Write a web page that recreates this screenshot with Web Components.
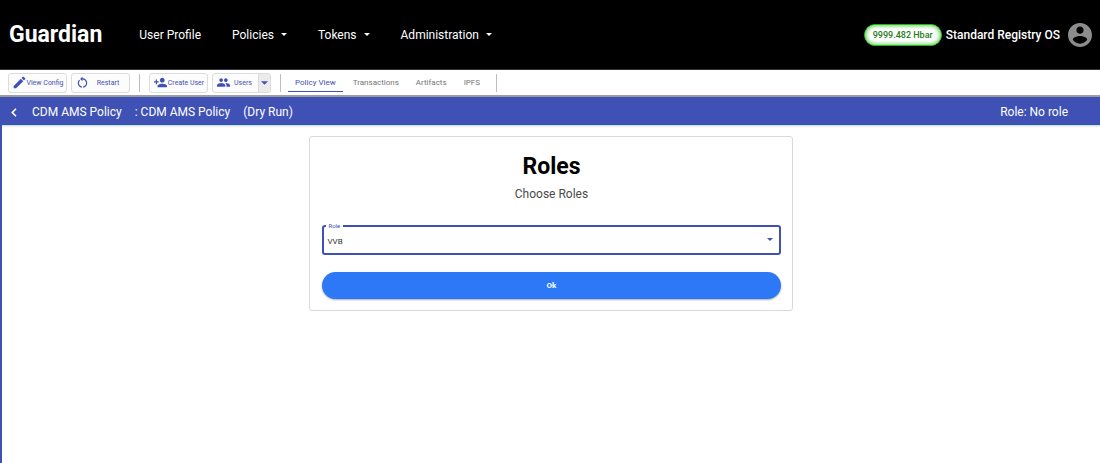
<!DOCTYPE html>
<html lang="en">
<head>
<meta charset="utf-8">
<title>Guardian</title>
<style>
html, body { margin: 0; height: 100%; }
body { font-family: Roboto, "Liberation Sans", sans-serif; background: #fff; }
</style>
</head>
<body>
<guardian-app></guardian-app>
<script>
const define = (name, html, setup) => {
  const template = document.createElement('template');
  template.innerHTML = html;
  customElements.define(name, class extends HTMLElement {
    constructor() {
      super();
      this.attachShadow({ mode: 'open' }).append(template.content.cloneNode(true));
    }
    connectedCallback() { if (setup) setup(this, this.shadowRoot); }
  });
};

define('nav-item', `
<style>
:host { display: block; }
a { display: flex; align-items: center; gap: 7px; color: #fff; font-size: 12px; line-height: 16px; text-decoration: none; white-space: nowrap; }
svg { display: none; width: 6px; height: 3px; fill: #fff; }
:host([menu]) svg { display: block; }
</style>
<a href="#"><slot></slot><svg viewBox="0 0 6 3"><path d="M0 0h6L3 3z"/></svg></a>`);

define('hbar-badge', `
<style>
:host { display: block; box-sizing: border-box; padding: 0 8px; border: 1px solid #22b814; border-radius: 12px; background: #fff; box-shadow: inset 0 0 5px #22b814; color: #1f7a1a; font-size: 9px; line-height: 20px; font-weight: 500; white-space: nowrap; }
</style><slot></slot>`);

define('app-header', `
<style>
:host { display: flex; align-items: center; box-sizing: border-box; height: 70px; padding: 0 8px 0 9px; background: #000; border-bottom: 1px solid #333; color: #fff; }
.brand { font-size: 23px; line-height: 28px; font-weight: 700; }
nav { display: flex; gap: 31px; margin-left: 37px; }
.account { display: flex; align-items: center; margin-left: auto; gap: 4px; }
.name { font-size: 12px; line-height: 16px; font-weight: 500; white-space: nowrap; }
svg { width: 24px; height: 24px; margin-left: 4px; fill: #8c8c8c; }
</style>
<div class="brand">Guardian</div>
<nav aria-label="Main">
  <nav-item>User Profile</nav-item><nav-item menu>Policies</nav-item><nav-item menu>Tokens</nav-item><nav-item menu>Administration</nav-item>
</nav>
<div class="account">
  <hbar-badge>9999.482 Hbar</hbar-badge>
  <span class="name">Standard Registry OS</span>
  <svg viewBox="2 2 20 20"><path d="M12 2C6.48 2 2 6.48 2 12s4.48 10 10 10 10-4.48 10-10S17.52 2 12 2zm0 3c1.66 0 3 1.34 3 3s-1.34 3-3 3-3-1.34-3-3 1.34-3 3-3zm0 14.2c-2.5 0-4.71-1.28-6-3.22.03-1.99 4-3.08 6-3.08 1.99 0 5.97 1.09 6 3.08-1.29 1.94-3.5 3.22-6 3.22z"/></svg>
</div>`);

const icons = {
  edit: ['2 2 20 20', 'M3 17.25V21h3.75L17.81 9.94l-3.75-3.75L3 17.25zM20.71 7.04c.39-.39.39-1.02 0-1.41l-2.34-2.34c-.39-.39-1.02-.39-1.41 0l-1.83 1.83 3.75 3.75 1.83-1.83z'],
  restart: ['1 1 22 22', 'M12 5V2L8 6l4 4V7c3.31 0 6 2.69 6 6 0 2.97-2.17 5.43-5 5.91v2.02c3.95-.49 7-3.85 7-7.93 0-4.42-3.58-8-8-8zM6 13c0-1.65.67-3.15 1.76-4.24L6.34 7.34C4.9 8.79 4 10.79 4 13c0 4.08 3.05 7.44 7 7.93v-2.02C8.17 18.43 6 15.97 6 13z'],
  add: ['1 2 22 20', 'M15 12c2.21 0 4-1.79 4-4s-1.79-4-4-4-4 1.79-4 4 1.79 4 4 4zm-9-2V7H4v3H1v2h3v3h2v-3h3v-2H6zm9 4c-2.67 0-8 1.34-8 4v2h16v-2c0-2.66-5.33-4-8-4z'],
  users: ['1 2 22 20', 'M16 11c1.66 0 2.99-1.34 2.99-3S17.66 5 16 5c-1.66 0-3 1.34-3 3s1.34 3 3 3zm-8 0c1.66 0 2.99-1.34 2.99-3S9.66 5 8 5C6.34 5 5 6.34 5 8s1.34 3 3 3zm0 2c-2.33 0-7 1.17-7 3.5V19h14v-2.5c0-2.33-4.67-3.5-7-3.5zm8 0c-.29 0-.62.02-.97.05 1.16.84 1.97 1.97 1.97 3.45V19h6v-2.5c0-2.33-4.67-3.5-7-3.5z']
};

define('tool-button', `
<style>
:host { display: flex; box-sizing: border-box; width: 59px; height: 20px; border: 1px solid #dcdcdc; border-radius: 3px; background: #fcfcfc; overflow: hidden; }
button { border: 0; padding: 0; margin: 0; background: none; color: #3f51b5; font: 400 7px/18px Roboto, "Liberation Sans", sans-serif; white-space: nowrap; }
.main { display: flex; flex: 1; align-items: center; padding: 0 2px 0 4px; }
.text { flex: 1; text-align: center; }
svg { flex: none; width: 13px; height: 13px; fill: currentColor; }
.more { display: none; align-items: center; justify-content: center; width: 12px; background: #ebebeb; border-left: 1px solid #dcdcdc; }
.more svg { width: 7px; height: 4px; }
:host([split]) .more { display: flex; }
</style>
<button class="main" type="button"><svg class="icon"><path/></svg><span class="text"><slot></slot></span></button>
<button class="more" type="button" aria-label="Choose user"><svg viewBox="0 0 6 3"><path d="M0 0h6L3 3z"/></svg></button>`,
(host, root) => {
  const [box, d] = icons[host.getAttribute('icon')];
  root.querySelector('.icon').setAttribute('viewBox', box);
  root.querySelector('.icon path').setAttribute('d', d);
});

define('tab-link', `
<style>
:host { display: block; }
a { display: block; box-sizing: border-box; height: 18px; padding: 0 7px; border-bottom: 1px solid transparent; color: #757575; font-size: 8px; line-height: 17px; text-decoration: none; white-space: nowrap; }
:host([active]) a { color: #3f51b5; border-color: #3f51b5; }
</style><a href="#"><slot></slot></a>`);

define('policy-toolbar', `
<style>
:host { display: flex; align-items: center; box-sizing: border-box; height: 27px; padding: 0 8px; border-bottom: 2px solid #9e9e9e; background: #fff; }
.group { display: flex; gap: 4px; }
.tabs { gap: 3px; }
hr { width: 1px; height: 18px; margin: 0 9px; border: 0; background: #bdbdbd; }
.short { margin: 0 7px 0 9px; }
</style>
<div class="group"><tool-button icon="edit">View Config</tool-button><tool-button icon="restart">Restart</tool-button></div>
<hr>
<div class="group"><tool-button icon="add">Create User</tool-button><tool-button icon="users" split>Users</tool-button></div>
<hr class="short">
<nav class="group tabs" aria-label="Policy"><tab-link active>Policy View</tab-link><tab-link>Transactions</tab-link><tab-link>Artifacts</tab-link><tab-link>IPFS</tab-link></nav>
<hr>`);

define('policy-title', `
<style>
:host { display: flex; align-items: center; box-sizing: border-box; height: 28px; padding: 3px 32px 0 11px; border-bottom: 1px solid #1c5fae; background: #3f51b5; box-shadow: 0 1px 2px #0003; color: #fff; font-size: 12px; line-height: 16px; white-space: nowrap; }
a { display: flex; margin-right: 14px; }
svg { width: 7px; height: 9px; fill: none; stroke: #fff; stroke-width: 1.6; }
.names { display: flex; gap: 13px; }
.role { margin-left: auto; }
</style>
<a href="#" aria-label="Back"><svg viewBox="0 0 7 9"><path d="M5 .7 1.3 4.5 5 8.3"/></svg></a>
<div class="names"><span>CDM AMS Policy</span><span>: CDM AMS Policy</span><span>(Dry Run)</span></div>
<span class="role">Role: No role</span>`);

define('role-select', `
<style>
:host { display: block; position: relative; }
select { display: block; box-sizing: border-box; width: 100%; height: 30px; margin: 0; padding: 3px 3px 0; border: 2px solid #3f51b5; border-radius: 3px; background: #fff; color: #333; font: 400 8px/16px Roboto, "Liberation Sans", sans-serif; appearance: none; outline: 0; }
label { position: absolute; left: 4px; top: -4px; padding: 0 3px 0 2px; background: #fff; color: #3f51b5; font-size: 6px; line-height: 10px; }
svg { position: absolute; right: 8px; top: 13px; width: 6px; height: 3px; fill: #3f51b5; pointer-events: none; }
</style>
<select id="role"><option>VVB</option></select>
<label for="role">Role</label>
<svg viewBox="0 0 6 3"><path d="M0 0h6L3 3z"/></svg>`);

define('roles-card', `
<style>
:host { display: block; box-sizing: border-box; padding: 16px 11px 11px 12px; border: 1px solid #d9d9d9; border-radius: 3px; background: #fff; text-align: center; }
h1 { margin: 0; color: #000; font-size: 23px; line-height: 28px; font-weight: 700; }
p { margin: 5px 0 23px; color: #4a4a4a; font-size: 12px; line-height: 16px; }
button { display: block; width: 100%; height: 27px; margin-top: 17px; padding: 0; border: 0; border-radius: 14px; background: #2c78f6; box-shadow: 0 1px 2px #0005; color: #fff; font: 700 8px/27px Roboto, "Liberation Sans", sans-serif; }
role-select { text-align: left; }
</style>
<h1>Roles</h1>
<p>Choose Roles</p>
<role-select></role-select>
<button type="button">Ok</button>`);

define('guardian-app', `
<style>
:host { display: flex; flex-direction: column; min-height: 100%; }
main { flex: 1; border-left: 2px solid #3f51b5; padding-top: 11px; }
roles-card { width: 44%; min-width: 280px; margin: 0 auto; }
</style>
<app-header></app-header>
<policy-toolbar></policy-toolbar>
<policy-title></policy-title>
<main><roles-card></roles-card></main>`);
</script>
</body>
</html>
